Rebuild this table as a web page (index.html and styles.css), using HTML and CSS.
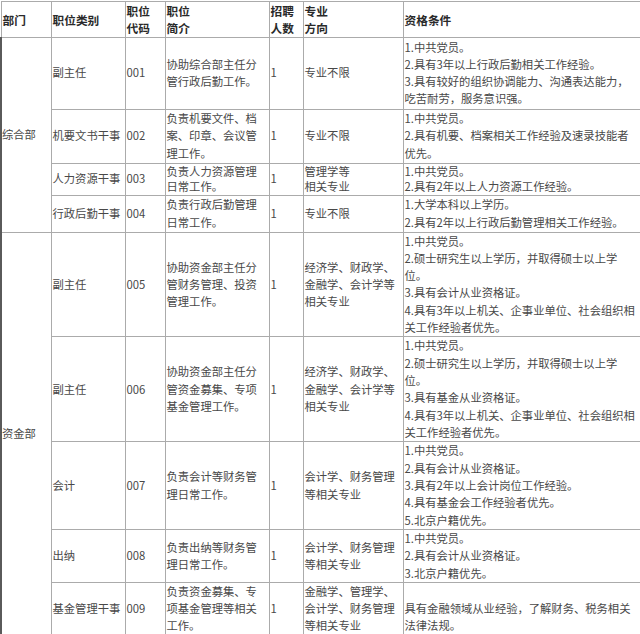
FILE: index.html
```html
<!DOCTYPE html>
<html lang="zh-CN">
<head>
<meta charset="utf-8">
<title>招聘职位表</title>
<link rel="stylesheet" href="styles.css">
</head>
<body>
<table class="jobs">
  <colgroup>
    <col class="c-dept">
    <col class="c-type">
    <col class="c-code">
    <col class="c-desc">
    <col class="c-num">
    <col class="c-major">
    <col class="c-req">
  </colgroup>
  <thead>
    <tr class="hd">
      <th>部门</th>
      <th>职位类别</th>
      <th>职位<br>代码</th>
      <th>职位<br>简介</th>
      <th>招聘<br>人数</th>
      <th>专业<br>方向</th>
      <th>资格条件</th>
    </tr>
  </thead>
  <tbody>
    <tr class="r1">
      <td class="dept" rowspan="4">综合部</td>
      <td>副主任</td>
      <td>001</td>
      <td>协助综合部主任分<br>管行政后勤工作。</td>
      <td>1</td>
      <td>专业不限</td>
      <td>1.中共党员。<br>2.具有3年以上行政后勤相关工作经验。<br>3.具有较好的组织协调能力、沟通表达能力，<br>吃苦耐劳，服务意识强。</td>
    </tr>
    <tr class="r2">
      <td>机要文书干事</td>
      <td>002</td>
      <td>负责机要文件、档<br>案、印章、会议管<br>理工作。</td>
      <td>1</td>
      <td>专业不限</td>
      <td>1.中共党员。<br>2.具有机要、档案相关工作经验及速录技能者<br>优先。</td>
    </tr>
    <tr class="r3">
      <td>人力资源干事</td>
      <td>003</td>
      <td>负责人力资源管理<br>日常工作。</td>
      <td>1</td>
      <td>管理学等<br>相关专业</td>
      <td>1.中共党员。<br>2.具有2年以上人力资源工作经验。</td>
    </tr>
    <tr class="r4">
      <td>行政后勤干事</td>
      <td>004</td>
      <td>负责行政后勤管理<br>日常工作。</td>
      <td>1</td>
      <td>专业不限</td>
      <td>1.大学本科以上学历。<br>2.具有2年以上行政后勤管理相关工作经验。</td>
    </tr>
    <tr class="r5">
      <td class="dept" rowspan="5">资金部</td>
      <td>副主任</td>
      <td>005</td>
      <td>协助资金部主任分<br>管财务管理、投资<br>管理工作。</td>
      <td>1</td>
      <td>经济学、财政学、<br>金融学、会计学等<br>相关专业</td>
      <td>1.中共党员。<br>2.硕士研究生以上学历，并取得硕士以上学<br>位。<br>3.具有会计从业资格证。<br>4.具有3年以上机关、企事业单位、社会组织相<br>关工作经验者优先。</td>
    </tr>
    <tr class="r6">
      <td>副主任</td>
      <td>006</td>
      <td>协助资金部主任分<br>管资金募集、专项<br>基金管理工作。</td>
      <td>1</td>
      <td>经济学、财政学、<br>金融学、会计学等<br>相关专业</td>
      <td>1.中共党员。<br>2.硕士研究生以上学历，并取得硕士以上学<br>位。<br>3.具有基金从业资格证。<br>4.具有3年以上机关、企事业单位、社会组织相<br>关工作经验者优先。</td>
    </tr>
    <tr class="r7">
      <td>会计</td>
      <td>007</td>
      <td>负责会计等财务管<br>理日常工作。</td>
      <td>1</td>
      <td>会计学、财务管理<br>等相关专业</td>
      <td>1.中共党员。<br>2.具有会计从业资格证。<br>3.具有2年以上会计岗位工作经验。<br>4.具有基金会工作经验者优先。<br>5.北京户籍优先。</td>
    </tr>
    <tr class="r8">
      <td>出纳</td>
      <td>008</td>
      <td>负责出纳等财务管<br>理日常工作。</td>
      <td>1</td>
      <td>会计学、财务管理<br>等相关专业</td>
      <td>1.中共党员。<br>2.具有会计从业资格证。<br>3.北京户籍优先。</td>
    </tr>
    <tr class="r9">
      <td>基金管理干事</td>
      <td>009</td>
      <td>负责资金募集、专<br>项基金管理等相关<br>工作。</td>
      <td>1</td>
      <td>金融学、管理学、<br>会计学、财务管理<br>等相关专业</td>
      <td><br>具有金融领域从业经验，了解财务、税务相关<br>法律法规。</td>
    </tr>
  </tbody>
</table>
</body>
</html>
```

FILE: styles.css
```css
html, body {
  margin: 0;
  padding: 0;
  background: #ffffff;
}

body {
  padding-top: 1px;
  font-family: "Noto Sans CJK SC", "Noto Sans", sans-serif;
  font-size: 11.3px;
  color: #484848;
}

.jobs {
  border-collapse: collapse;
  table-layout: fixed;
  width: 639px;
}

.c-dept { width: 50px; }
.c-type { width: 74px; }
.c-code { width: 40px; }
.c-desc { width: 104px; }
.c-num { width: 34px; }
.c-major { width: 100px; }
.c-req { width: 237px; }

.jobs th,
.jobs td {
  border: 1px solid #ababab;
  padding: 0 0 0 1px;
  line-height: 17.3px;
  vertical-align: middle;
  text-align: left;
  white-space: nowrap;
  overflow: visible;
}

.jobs th {
  color: #2a2a2a;
  font-weight: bold;
  font-size: 11.7px;
}

.jobs td.dept {
  border-left: 2px solid #5a5a5a;
  padding-left: 0;
}

.hd th { height: 33px; }
.r1 td { height: 71px; }
.r2 td { height: 53px; }
.r3 td { height: 31px; line-height: 15.5px; }
.r4 td { height: 36px; }
.r5 td { height: 103px; }
.r6 td { height: 104px; }
.r7 td { height: 86px; }
.r8 td { height: 52px; }
.r9 td { height: 50px; }
.jobs td.dept { line-height: 17.3px; }
```
